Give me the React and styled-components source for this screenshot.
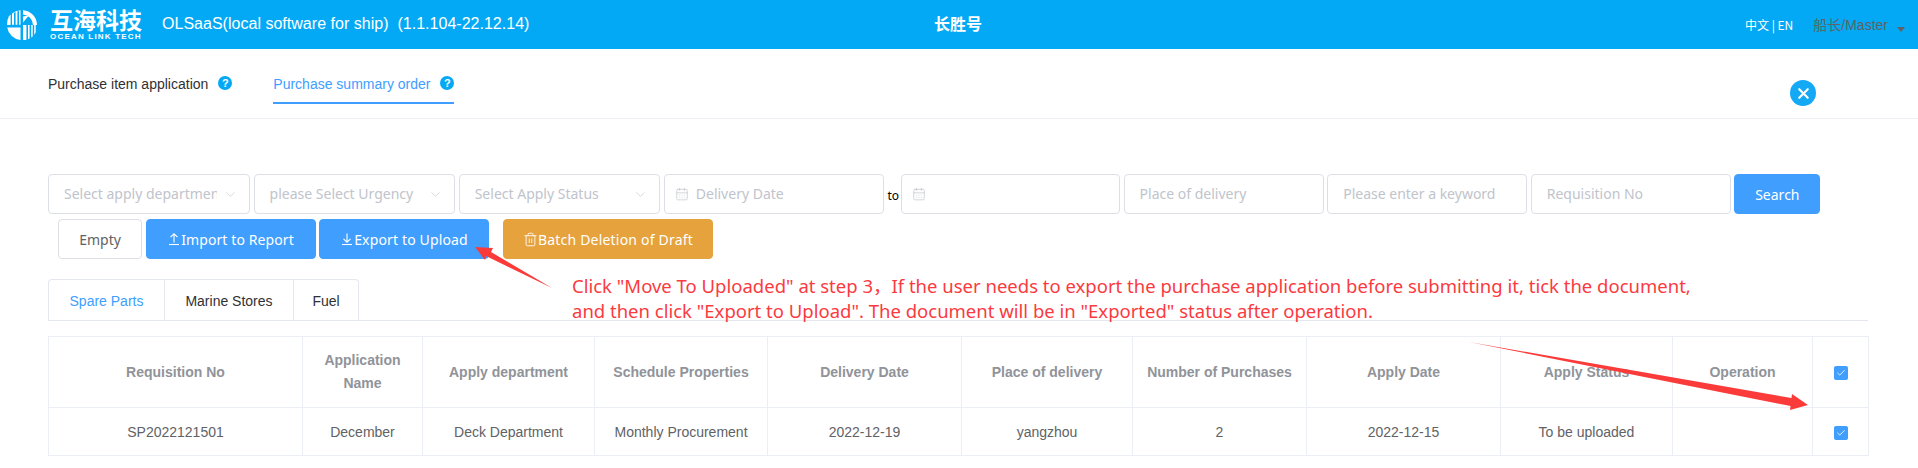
import React from "react";
import styled, { createGlobalStyle } from "styled-components";
import { CalendarDays, ChevronDown, Check, X, Trash2 } from "lucide-react";

const Global = createGlobalStyle`
  html, body { margin: 0; padding: 0; background: #fff; }
  body { font-family: "Liberation Sans", Arial, sans-serif; font-size: 14px; color: #606266; overflow: hidden; }
  * { box-sizing: border-box; }
`;
const YAHEI = `"Noto Sans", "Noto Sans CJK SC", sans-serif`;

const Page = styled.div`position: relative; width: 1918px; height: 468px; overflow: hidden;`;

const Header = styled.header`
  height: 49px; background: #04a9f5; color: #fff; display: flex; align-items: center; position: relative;
`;
const Brand = styled.div`display: flex; align-items: center; width: 162px; padding-left: 6px; gap: 12px; flex: none;`;
const BrandText = styled.div`display: flex; flex-direction: column; align-items: flex-start; width: 92px;`;
const BrandCn = styled.div`
  font-family: "Noto Sans CJK SC", sans-serif; font-weight: 700; font-size: 23px; line-height: 22px; letter-spacing: 0; white-space: nowrap;
`;
const BrandEn = styled.div`font-weight: 700; font-size: 8px; line-height: 8px; letter-spacing: 1.2px; white-space: nowrap; margin-top: 3px;`;
const AppTitle = styled.div`font-size: 16px; white-space: pre; width: 772px; margin-top: -2px; letter-spacing: .02px; flex: none;`;
const Ship = styled.div`font-family: "Noto Sans CJK SC", sans-serif; font-size: 16px; font-weight: 700; margin-top: -3px;`;
const HeaderRight = styled.div`margin-left: auto; display: flex; align-items: center; padding-right: 13px; margin-top: -1px;`;
const Lang = styled.div`font-family: "Noto Sans CJK SC", sans-serif; font-size: 12px; font-weight: 400; margin-right: 20px;`;
const User = styled.div`font-family: "Liberation Sans", "Noto Sans CJK SC", sans-serif; font-size: 14px; color: #606266; margin-right: 9px;`;
const Caret = styled.span`
  width: 0; height: 0; border-left: 4px solid transparent; border-right: 4px solid transparent;
  border-top: 5px solid #606266; margin-top: 11px;
`;

const TabsBar = styled.nav`
  height: 70px; border-bottom: 1px solid #ebeef5; display: flex; align-items: flex-start; padding-left: 48px; position: relative;
`;
const TopTab = styled.div`
  display: flex; align-items: center; height: 55px; gap: 10px; padding-top: 16px; margin-right: ${p => p.$gap || 0}px;
  color: ${p => (p.$active ? "#409eff" : "#303133")};
  border-bottom: 2px solid ${p => (p.$active ? "#409eff" : "transparent")};
`;
const Help = styled.span`
  width: 14px; height: 14px; border-radius: 50%; background: #04a9f5; color: #fff; font-size: 11px; font-weight: 700;
  display: inline-flex; align-items: center; justify-content: center; margin-top: -2px;
`;
const CloseBtn = styled.span`
  position: absolute; left: 1790px; top: 31px; width: 26px; height: 26px; border-radius: 50%; background: #14a9f5; color: #fff;
  display: flex; align-items: center; justify-content: center;
`;

const Main = styled.main`padding: 55px 50px 0 48px;`;
const FilterRow = styled.div`display: flex; align-items: center; gap: 3.6px; height: 40px;`;
const Field = styled.div`
  width: ${p => p.$w}px; height: 40px; border: 1px solid #dcdfe6; border-radius: 4px; background: #fff; flex: none;
  display: flex; align-items: center; padding: 0 ${p => p.$pr ?? 15}px 1px ${p => p.$pl ?? 15}px; gap: ${p => p.$gap ?? 6}px; position: relative;
  font-family: ${YAHEI}; font-size: 14px; color: #c0c4cc; white-space: nowrap; overflow: hidden;
`;
const Clip = styled.span`overflow: hidden; flex: 1; min-width: 0;`;
const SelectArrow = styled.span`position: absolute; right: 11px; top: 12px; display: flex; color: #c0c4cc;`;
const To = styled.span`font-family: ${YAHEI}; font-size: 12px; color: #000; width: 10px; text-align: center; flex: none; margin-top: 3px;`;

const Btn = styled.button`
  height: 40px; width: ${p => p.$w}px; flex: none; border-radius: 4px; border: 1px solid ${p => p.$bg || "#dcdfe6"};
  background: ${p => p.$bg || "#fff"}; color: ${p => (p.$bg ? "#fff" : "#606266")};
  font-family: ${YAHEI}; font-size: 14px; padding: 0; display: inline-flex; align-items: center; justify-content: center;
  margin-left: ${p => p.$ml || 0}px; white-space: nowrap; letter-spacing: ${p => p.$ls || 0}px;
`;
const ActionRow = styled.div`display: flex; align-items: center; margin-top: 5px; padding-left: 10px; gap: 3.5px;`;

const TypeTabs = styled.div`
  display: flex; margin-top: 20px; height: 42px; border-bottom: 1px solid #e4e7ed;
`;
const TypeTabGroup = styled.div`display: flex; border: 1px solid #e4e7ed; border-bottom: none; border-radius: 4px 4px 0 0; height: 41px;`;
const TypeTab = styled.div`
  height: 41px; padding-top: 1px; width: ${p => p.$w}px; display: flex; align-items: center; justify-content: center; font-size: 14px;
  color: ${p => (p.$active ? "#409eff" : "#303133")};
  border-left: ${p => (p.$first ? "none" : "1px solid #e4e7ed")};
`;

const Table = styled.table`
  border-collapse: collapse; table-layout: fixed; width: 1820px; margin-top: 15px;
  border: 1px solid #ebeef5;
`;
const Th = styled.th`
  height: 71px; border: 1px solid #ebeef5; color: #909399; font-size: 14px; font-weight: 700; line-height: 23px; text-align: center; padding: 0 10px;
`;
const Td = styled.td`
  height: 48px; border: 1px solid #ebeef5; color: #606266; font-size: 14px; text-align: center; padding: 0;
`;
const CheckBox = styled.span`
  display: inline-flex; width: 14px; height: 14px; border-radius: 2px; background: #409eff; color: #fff;
  align-items: center; justify-content: center; vertical-align: middle;
`;

const Note = styled.div`
  position: absolute; left: 572px; top: 273px; color: #fb3a3f; font-family: ${YAHEI}; font-size: 18.5px; line-height: 25px; white-space: pre;
`;
const Overlay = styled.svg`position: absolute; left: 0; top: 0; pointer-events: none;`;

const Logo = () => (
  <svg width="32" height="32" viewBox="0 0 32 32" fill="none">
    <path d="M17 1.200A15 15 0 0 1 31 16h-4A11 11 0 0 0 17 5.400z" fill="#fff" />
    <path d="M14.500 1.200A15 15 0 0 0 6 4.600v11.200h2V3.900l1.600-.9v12.800h1.800V2.300l1.600-.4v13.900h1.500z" fill="#fff" />
    <path d="M3 7.300A15 15 0 0 0 1 16h3.600V5.500z" fill="#fff" />
    <path d="M1.200 18.500A15 15 0 0 0 14.500 31V18.500z" fill="#fff" />
    <path d="M17 7.500l6-1.200-6 7.200zM17 16h3.400v14.700A15 15 0 0 1 17 31z" fill="#fff" />
    <path d="M22 30.200V16h1.600v13.400zM25.200 28.600V16h1.500v11.400zM28.200 26V16h1.500v7.200z" fill="#fff" />
  </svg>
);
const UpIcon = ({ down }) => (
  <svg width="14" height="14" viewBox="0 0 14 14" fill="none" stroke="#fff" strokeWidth="1.1">
    <path d="M2 12.500h10" />
    {down ? <path d="M7 1.500v8.500M3.500 6.800 7 10.200l3.500-3.400" /> : <path d="M7 10.500V2M3.500 5.200 7 1.800l3.500 3.400" />}
  </svg>
);

const Select = ({ w, children }) => (
  <Field $w={w} $pr={32}>
    <Clip>{children}</Clip>
    <SelectArrow><ChevronDown size={15} strokeWidth={1} /></SelectArrow>
  </Field>
);
const DateField = ({ w, children }) => (
  <Field $w={w} $pl={10} $gap={7}>
    <CalendarDays size={14} strokeWidth={1.2} color="#c0c4cc" />
    {children}
  </Field>
);

const columns = [
  [254, "Requisition No"], [120, "Application Name"], [172, "Apply department"], [173, "Schedule Properties"],
  [194, "Delivery Date"], [171, "Place of delivery"], [174, "Number of Purchases"], [194, "Apply Date"],
  [172, "Apply Status"], [140, "Operation"],
];
const row = ["SP2022121501", "December", "Deck Department", "Monthly Procurement", "2022-12-19", "yangzhou", "2", "2022-12-15", "To be uploaded", ""];

export default function App() {
  return (
    <Page>
      <Global />
      <Header>
        <Brand>
          <Logo />
          <BrandText>
            <BrandCn>互海科技</BrandCn>
            <BrandEn>OCEAN LINK TECH</BrandEn>
          </BrandText>
        </Brand>
        <AppTitle>{"OLSaaS(local software for ship)  (1.1.104-22.12.14)"}</AppTitle>
        <Ship>长胜号</Ship>
        <HeaderRight>
          <Lang>中文 | EN</Lang>
          <User>船长/Master</User>
          <Caret />
        </HeaderRight>
      </Header>

      <TabsBar>
        <TopTab $gap={41}>Purchase item application <Help>?</Help></TopTab>
        <TopTab $active>Purchase summary order <Help>?</Help></TopTab>
        <CloseBtn><X size={17} strokeWidth={3} /></CloseBtn>
      </TabsBar>

      <Main>
        <FilterRow>
          <Select w={202}>Select apply department</Select>
          <Select w={201.5}>please Select Urgency</Select>
          <Select w={201.5}>Select Apply Status</Select>
          <DateField w={220}>Delivery Date</DateField>
          <To>to</To>
          <DateField w={219} />
          <Field $w={200}>Place of delivery</Field>
          <Field $w={200}>Please enter a keyword</Field>
          <Field $w={200}>Requisition No</Field>
          <Btn $w={86} $bg="#409eff">Search</Btn>
        </FilterRow>
        <ActionRow>
          <Btn $w={84}>Empty</Btn>
          <Btn $w={170} $bg="#409eff" $ls={0.1}><UpIcon />Import to Report</Btn>
          <Btn $w={170} $bg="#409eff" $ls={0.15}><UpIcon down />Export to Upload</Btn>
          <Btn $w={210} $ml={10.5} $bg="#e6a23c" $ls={0.2}><Trash2 size={15} strokeWidth={1.4} />Batch Deletion of Draft</Btn>
        </ActionRow>

        <TypeTabs>
          <TypeTabGroup>
            <TypeTab $w={115} $first $active>Spare Parts</TypeTab>
            <TypeTab $w={129}>Marine Stores</TypeTab>
            <TypeTab $w={65}>Fuel</TypeTab>
          </TypeTabGroup>
        </TypeTabs>

        <Table>
          <colgroup>
            {columns.map(([w, t]) => <col key={t} width={w} />)}
            <col width={56} />
          </colgroup>
          <thead>
            <tr>
              {columns.map(([, t]) => <Th key={t}>{t}</Th>)}
              <Th><CheckBox><Check size={10} strokeWidth={2} /></CheckBox></Th>
            </tr>
          </thead>
          <tbody>
            <tr>
              {row.map((t, i) => <Td key={i}>{t}</Td>)}
              <Td><CheckBox><Check size={10} strokeWidth={2} /></CheckBox></Td>
            </tr>
          </tbody>
        </Table>
      </Main>

      <Note>{'Click "Move To Uploaded" at step 3，If the user needs to export the purchase application before submitting it, tick the document,\nand then click "Export to Upload". The document will be in "Exported" status after operation.'}</Note>
      <Overlay width="1918" height="468" viewBox="0 0 1918 468">
        <path d="M475 247 493 248 491 252 552 288 486 256 485 260z" fill="#fb3a3a" />
        <path d="M1469 342 1791.500 398 1792 394 1808 405 1790 410 1790.500 406z" fill="#fb3a3a" />
      </Overlay>
    </Page>
  );
}
